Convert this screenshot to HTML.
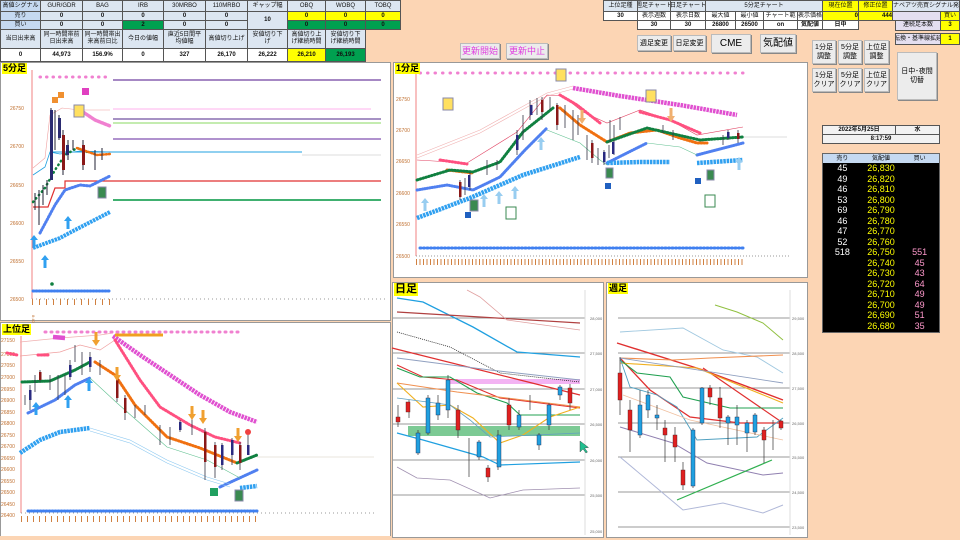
<!DOCTYPE html>
<html><head><meta charset="utf-8">
<style>
*{margin:0;padding:0;box-sizing:border-box}
body{width:960px;height:540px;overflow:hidden;background:#fcd5b4;font-family:"Liberation Sans","Noto Sans CJK JP",sans-serif;position:relative}
.c{position:absolute;border:1px solid #555;font-size:6px;display:flex;align-items:center;justify-content:center;text-align:center;line-height:7px;color:#111;background:#dce6f1;white-space:nowrap;overflow:hidden}
.w{background:#fff}.y{background:#ffff00}.g{background:#00a050}.lb{background:#c5d9f1}.lil{background:#e4dff0}
.b{font-weight:bold}
.btn{position:absolute;background:#ececec;border:1px solid #bbb;box-shadow:1px 1px 0 #888;font-size:7px;display:flex;align-items:center;justify-content:center;text-align:center;line-height:9px}
.panel{position:absolute;background:#fff;border:1px solid #999}
.lbl{position:absolute;background:#ffff00;font-size:9px;font-weight:bold;padding:0 1px;line-height:11px}
svg{position:absolute;left:0;top:0}
.ob{position:absolute;left:822px;top:153px;width:118px;height:180px;background:#000;border:1px solid #666}
.ob div{display:flex;height:10.5px;font-size:9px;line-height:10.5px}
.ob span{width:39px;text-align:center}
</style></head><body>

<!-- header table -->
<div class="c lb" style="left:0;top:0;width:41px;height:12px">高値シグナル</div>
<div class="c" style="left:40;left:40px;top:0;width:43px;height:12px">GUR/GDR</div>
<div class="c" style="left:82px;top:0;width:41px;height:12px">BAG</div>
<div class="c" style="left:122px;top:0;width:42px;height:12px">IRB</div>
<div class="c" style="left:163px;top:0;width:43px;height:12px">30MRBO</div>
<div class="c" style="left:205px;top:0;width:43px;height:12px">110MRBO</div>
<div class="c" style="left:247px;top:0;width:41px;height:12px">ギャップ幅</div>
<div class="c" style="left:287px;top:0;width:39px;height:12px">OBQ</div>
<div class="c" style="left:325px;top:0;width:41px;height:12px">WOBQ</div>
<div class="c" style="left:365px;top:0;width:36px;height:12px">TOBQ</div>

<div class="c lb" style="left:0;top:11px;width:41px;height:10px">売り</div>
<div class="c b" style="left:40px;top:11px;width:43px;height:10px">0</div>
<div class="c b" style="left:82px;top:11px;width:41px;height:10px">0</div>
<div class="c b" style="left:122px;top:11px;width:42px;height:10px">0</div>
<div class="c b" style="left:163px;top:11px;width:43px;height:10px">0</div>
<div class="c b" style="left:205px;top:11px;width:43px;height:10px">0</div>
<div class="c b" style="left:247px;top:11px;width:41px;height:19px">10</div>
<div class="c b y" style="left:287px;top:11px;width:39px;height:10px">0</div>
<div class="c b y" style="left:325px;top:11px;width:41px;height:10px">0</div>
<div class="c b y" style="left:365px;top:11px;width:36px;height:10px">0</div>

<div class="c lb" style="left:0;top:20px;width:41px;height:10px">買い</div>
<div class="c b" style="left:40px;top:20px;width:43px;height:10px">0</div>
<div class="c b" style="left:82px;top:20px;width:41px;height:10px">0</div>
<div class="c b g" style="left:122px;top:20px;width:42px;height:10px">2</div>
<div class="c b" style="left:163px;top:20px;width:43px;height:10px">0</div>
<div class="c b" style="left:205px;top:20px;width:43px;height:10px">0</div>
<div class="c b g" style="left:287px;top:20px;width:39px;height:10px">0</div>
<div class="c b g" style="left:325px;top:20px;width:41px;height:10px">0</div>
<div class="c b g" style="left:365px;top:20px;width:36px;height:10px">0</div>

<div class="c" style="left:0;top:29px;width:41px;height:20px">当日出来高</div>
<div class="c" style="left:40px;top:29px;width:43px;height:20px">同一時間帯前<br>日出来高</div>
<div class="c" style="left:82px;top:29px;width:41px;height:20px">同一時間帯出<br>来高前日比</div>
<div class="c" style="left:122px;top:29px;width:42px;height:20px">今日の値幅</div>
<div class="c" style="left:163px;top:29px;width:43px;height:20px">直近5日間平<br>均値幅</div>
<div class="c" style="left:205px;top:29px;width:43px;height:20px">高値切り上げ</div>
<div class="c" style="left:247px;top:29px;width:41px;height:20px">安値切り下<br>げ</div>
<div class="c" style="left:287px;top:29px;width:39px;height:20px">高値切り上<br>げ継続時間</div>
<div class="c" style="left:325px;top:29px;width:41px;height:20px">安値切り下<br>げ継続時間</div>

<div class="c b w" style="left:0;top:48px;width:41px;height:14px">0</div>
<div class="c b w" style="left:40px;top:48px;width:43px;height:14px">44,973</div>
<div class="c b w" style="left:82px;top:48px;width:41px;height:14px">156.9%</div>
<div class="c b w" style="left:122px;top:48px;width:42px;height:14px">0</div>
<div class="c b w" style="left:163px;top:48px;width:43px;height:14px">327</div>
<div class="c b w" style="left:205px;top:48px;width:43px;height:14px">26,170</div>
<div class="c b w" style="left:247px;top:48px;width:41px;height:14px">26,222</div>
<div class="c b y" style="left:287px;top:48px;width:39px;height:14px">26,210</div>
<div class="c b g" style="left:325px;top:48px;width:41px;height:14px">26,193</div>

<!-- right top table -->
<div class="c" style="left:603px;top:0;width:35px;height:12px">上位足種</div>
<div class="c" style="left:637px;top:0;width:34px;height:12px">週足チャート</div>
<div class="c" style="left:670px;top:0;width:36px;height:12px">日足チャート</div>
<div class="c" style="left:705px;top:0;width:118px;height:12px">5分足チャート</div>
<div class="c y" style="left:822px;top:0;width:37px;height:12px">現在位置</div>
<div class="c y" style="left:858px;top:0;width:35px;height:12px">修正位置</div>
<div class="c" style="left:892px;top:0;width:68px;height:12px">ナベアツ売買シグナル発</div>
<div class="c b w" style="left:603px;top:11px;width:35px;height:10px">30</div>
<div class="c w" style="left:637px;top:11px;width:34px;height:10px">表示週数</div>
<div class="c w" style="left:670px;top:11px;width:36px;height:10px">表示日数</div>
<div class="c w" style="left:705px;top:11px;width:31px;height:10px">最大値</div>
<div class="c w" style="left:735px;top:11px;width:29px;height:10px">最小値</div>
<div class="c w" style="left:763px;top:11px;width:35px;height:10px">チャート範</div>
<div class="c w" style="left:797px;top:11px;width:26px;height:10px">表示価格</div>
<div class="c b y" style="left:822px;top:11px;width:37px;height:10px;justify-content:flex-end">0</div>
<div class="c b y" style="left:858px;top:11px;width:35px;height:10px;justify-content:flex-end">444</div>
<div class="c lil" style="left:892px;top:11px;width:49px;height:10px"></div>
<div class="c y" style="left:940px;top:11px;width:20px;height:10px">買い</div>
<div class="c b w" style="left:637px;top:20px;width:34px;height:10px">30</div>
<div class="c b w" style="left:670px;top:20px;width:36px;height:10px">30</div>
<div class="c b w" style="left:705px;top:20px;width:31px;height:10px">26800</div>
<div class="c b w" style="left:735px;top:20px;width:29px;height:10px">26500</div>
<div class="c b w" style="left:763px;top:20px;width:35px;height:10px">on</div>
<div class="c b w" style="left:797px;top:20px;width:26px;height:10px">気配値</div>
<div class="c b w" style="left:822px;top:20px;width:37px;height:10px">日中</div>
<div class="c lil" style="left:895px;top:20px;width:46px;height:11px">連続足本数</div>
<div class="c b y" style="left:940px;top:20px;width:20px;height:11px">3</div>
<div class="c lil" style="left:895px;top:33px;width:46px;height:12px">転換・基準線拡延</div>
<div class="c b y" style="left:940px;top:33px;width:20px;height:12px">1</div>

<div class="btn" style="left:637px;top:35px;width:34px;height:16px">週足変更</div>
<div class="btn" style="left:673px;top:35px;width:33px;height:16px">日足変更</div>
<div class="btn" style="left:711px;top:34px;width:40px;height:19px;font-size:10px">CME</div>
<div class="btn" style="left:760px;top:34px;width:36px;height:19px;font-size:10px">気配値</div>
<div class="btn" style="left:460px;top:43px;width:40px;height:16px;color:#e040e0;font-size:9px">更新開始</div>
<div class="btn" style="left:506px;top:43px;width:42px;height:16px;color:#e040e0;font-size:9px">更新中止</div>
<div class="btn" style="left:812px;top:40px;width:24px;height:24px">1分足<br>調整</div>
<div class="btn" style="left:838px;top:40px;width:24px;height:24px">5分足<br>調整</div>
<div class="btn" style="left:864px;top:40px;width:25px;height:24px">上位足<br>調整</div>
<div class="btn" style="left:812px;top:68px;width:24px;height:24px">1分足<br>クリア</div>
<div class="btn" style="left:838px;top:68px;width:24px;height:24px">5分足<br>クリア</div>
<div class="btn" style="left:864px;top:68px;width:25px;height:24px">上位足<br>クリア</div>
<div class="btn" style="left:897px;top:52px;width:40px;height:48px">日中･夜間<br>切替</div>

<div class="c b" style="left:822px;top:125px;width:74px;height:10px;background:#f2f2f2">2022年5月25日</div>
<div class="c b" style="left:895px;top:125px;width:45px;height:10px;background:#f2f2f2">水</div>
<div class="c b" style="left:822px;top:134px;width:118px;height:10px;background:#f2f2f2">8:17:59</div>

<div class="ob">
<div style="background:#c5d9f1;height:9px;font-size:6px;color:#000"><span>売り</span><span>気配値</span><span>買い</span></div>
<div><span style="color:#fff">45</span><span style="color:#ff0">26,830</span><span></span></div>
<div><span style="color:#fff">49</span><span style="color:#ff0">26,820</span><span></span></div>
<div><span style="color:#fff">46</span><span style="color:#ff0">26,810</span><span></span></div>
<div><span style="color:#fff">53</span><span style="color:#ff0">26,800</span><span></span></div>
<div><span style="color:#fff">69</span><span style="color:#ff0">26,790</span><span></span></div>
<div><span style="color:#fff">46</span><span style="color:#ff0">26,780</span><span></span></div>
<div><span style="color:#fff">47</span><span style="color:#ff0">26,770</span><span></span></div>
<div><span style="color:#fff">52</span><span style="color:#ff0">26,760</span><span></span></div>
<div><span style="color:#fff">518</span><span style="color:#ff0">26,750</span><span style="color:#f9c">551</span></div>
<div><span></span><span style="color:#ff0">26,740</span><span style="color:#f9c">45</span></div>
<div><span></span><span style="color:#ff0">26,730</span><span style="color:#f9c">43</span></div>
<div><span></span><span style="color:#ff0">26,720</span><span style="color:#f9c">64</span></div>
<div><span></span><span style="color:#ff0">26,710</span><span style="color:#f9c">49</span></div>
<div><span></span><span style="color:#ff0">26,700</span><span style="color:#f9c">49</span></div>
<div><span></span><span style="color:#ff0">26,690</span><span style="color:#f9c">51</span></div>
<div><span></span><span style="color:#ff0">26,680</span><span style="color:#f9c">35</span></div>
</div>

<!-- panels -->
<div class="panel" style="left:0;top:62px;width:391px;height:259px"></div>
<div class="panel" style="left:0;top:322px;width:391px;height:216px"></div>
<div class="panel" style="left:393px;top:62px;width:415px;height:216px"></div>
<div class="panel" style="left:392px;top:282px;width:212px;height:256px"></div>
<div class="panel" style="left:606px;top:282px;width:202px;height:256px"></div>

<svg width="960" height="540" viewBox="0 0 960 540" fill="none" font-family="Liberation Sans" >
<!-- ===== 5min chart ===== -->
<g font-size="5" fill="#c07030">
<text x="10" y="110" fill="#c07030">26750</text><text x="10" y="148" fill="#c07030">26700</text><text x="10" y="187" fill="#c07030">26650</text><text x="10" y="225" fill="#c07030">26600</text><text x="10" y="263" fill="#c07030">26550</text><text x="10" y="301" fill="#c07030">26500</text>
</g>
<line x1="32" y1="70" x2="32" y2="299" stroke="#f08080" stroke-width="1"/>
<line x1="32" y1="299" x2="386" y2="299" stroke="#999" stroke-dasharray="1 3"/>
<line x1="113" y1="80" x2="381" y2="80" stroke="#7040a0" stroke-width="1.2"/>
<line x1="113" y1="109" x2="371" y2="109" stroke="#ffc0f0" stroke-width="1.2"/>
<line x1="113" y1="119" x2="381" y2="119" stroke="#7050a0" stroke-width="1.3"/>
<line x1="113" y1="123" x2="381" y2="123" stroke="#a0e080" stroke-width="1.3"/>
<line x1="113" y1="139" x2="381" y2="139" stroke="#8050b0" stroke-width="1.3"/>
<line x1="52" y1="152" x2="302" y2="152" stroke="#20a0e0" stroke-width="1"/>
<line x1="302" y1="155" x2="381" y2="155" stroke="#ddd" stroke-width="1"/>
<polyline points="33,207 48,207 55,188 65,188 65,181 381,181" stroke="#e03030" stroke-width="1.2"/>
<line x1="113" y1="200" x2="381" y2="200" stroke="#40b070" stroke-width="2"/>
<polyline points="33,168 45,158 50,115 62,108 80,110 110,110" stroke="#f0a0a0" stroke-width=".6"/>
<polyline points="33,175 45,167 50,152 60,154 80,151 110,152" stroke="#20a0e0" stroke-width=".8"/>
<polyline points="83,112 95,120 110,126" stroke="#f080d0" stroke-width="3.5" stroke-dasharray="2 1.5" stroke-linecap="round"/>
<polyline points="33,202 45,188 55,170 65,155 77,148 90,153" stroke="#108040" stroke-width="2.5" stroke-dasharray=".5 4" stroke-linecap="round"/>
<polyline points="77,148 97,155 110,154" stroke="#f07010" stroke-width="2.5" stroke-dasharray="1 2" stroke-linecap="round"/>
<polyline points="40,233 55,205 65,190 80,185 90,186 110,176" stroke="#5080f0" stroke-width="3" stroke-dasharray="1 2" stroke-linecap="round"/>
<polyline points="33,248 60,238 75,230 110,212" stroke="#30a0f0" stroke-width="4" stroke-dasharray="2.5 .8"/>
<line x1="33" y1="291" x2="110" y2="291" stroke="#4080f0" stroke-width="3" stroke-dasharray="1 2" stroke-linecap="round"/>
<line x1="40" y1="77" x2="110" y2="77" stroke="#f080d0" stroke-width="3" stroke-dasharray=".5 6" stroke-linecap="round"/>
<g stroke="#223" stroke-width="1">
<line x1="35" y1="193" x2="35" y2="210"/><line x1="39" y1="190" x2="39" y2="225"/><line x1="43" y1="185" x2="43" y2="205"/><line x1="47" y1="180" x2="47" y2="195"/><line x1="51" y1="108" x2="51" y2="180"/><line x1="55" y1="110" x2="55" y2="150"/><line x1="59" y1="115" x2="59" y2="140"/><line x1="63" y1="130" x2="63" y2="175"/><line x1="68" y1="140" x2="68" y2="160"/><line x1="73" y1="140" x2="73" y2="150"/><line x1="83" y1="140" x2="83" y2="170"/><line x1="95" y1="150" x2="95" y2="170"/><line x1="102" y1="148" x2="102" y2="160"/>
</g>
<g fill="#2a2a70"><rect x="50" y="110" width="3" height="70"/><rect x="58" y="118" width="3" height="20"/><rect x="66" y="145" width="3" height="10"/></g>
<g fill="#8a1818"><rect x="62" y="135" width="3" height="35"/><rect x="82" y="145" width="3" height="20"/></g>
<g fill="#30a0f0"><path d="M30 240l4-5 4 5h-2.5v8h-3v-8z"/><path d="M41 260l4-5 4 5h-2.5v8h-3v-8z"/><path d="M64 221l4-5 4 5h-2.5v8h-3v-8z"/></g>
<rect x="74" y="105" width="10" height="12" fill="#ffe060" stroke="#88a"/>
<rect x="82" y="88" width="7" height="7" fill="#e040c0"/>
<rect x="52" y="97" width="6" height="6" fill="#f09030"/><rect x="58" y="92" width="6" height="6" fill="#f09030"/>
<rect x="98" y="187" width="8" height="11" fill="#3a8a50" stroke="#88a"/>
<circle cx="52" cy="284" r="1.8" fill="#108040"/>
<g font-size="4" fill="#c07030"><text x="32" y="315" transform="rotate(90 32 315)">8:40</text></g>
<line x1="32" y1="302" x2="110" y2="302" stroke="#d08040" stroke-width="6" stroke-dasharray="1 6"/>

<!-- ===== upper chart ===== -->
<g font-size="5" fill="#c07030">
<text x="1" y="342">27150</text><text x="1" y="356">27100</text><text x="1" y="367">27050</text><text x="1" y="379">27000</text><text x="1" y="391">26950</text><text x="1" y="402">26900</text><text x="1" y="414">26850</text><text x="1" y="425">26800</text><text x="1" y="437">26750</text><text x="1" y="448">26700</text><text x="1" y="460">26650</text><text x="1" y="471">26600</text><text x="1" y="483">26550</text><text x="1" y="494">26500</text><text x="1" y="506">26450</text><text x="1" y="517">26400</text>
</g>
<line x1="21" y1="336" x2="21" y2="513" stroke="#f08080"/>
<line x1="21" y1="513" x2="376" y2="513" stroke="#999" stroke-dasharray="1 3"/>
<line x1="257" y1="457" x2="374" y2="457" stroke="#e0ddd0" stroke-width=".8"/>
<polyline points="20,342 60,338 100,335 113,333" stroke="#f0b0b0" stroke-width=".7"/>
<polyline points="20,356 60,352 80,345 100,350 115,340" stroke="#f0a0a0" stroke-width=".7"/>
<polyline points="113,336 140,355 170,375 200,395 230,412 257,422" stroke="#e050d0" stroke-width="4.5" stroke-dasharray="2.5 .8"/>
<line x1="53" y1="337" x2="65" y2="338" stroke="#e050d0" stroke-width="4.5"/>
<polyline points="7,353 17,355" stroke="#ff5080" stroke-width="3" stroke-dasharray="1 2" stroke-linecap="round"/>
<polyline points="38,355 50,355" stroke="#ff5080" stroke-width="3" stroke-dasharray="1 2" stroke-linecap="round"/>
<polyline points="115,340 140,380 160,407 190,425 215,437 240,443" stroke="#ff5080" stroke-width="3" stroke-dasharray="1 2" stroke-linecap="round"/>
<polyline points="95,362 115,375 135,405 167,437 200,448 237,463" stroke="#f07010" stroke-width="3" stroke-dasharray="1 2" stroke-linecap="round"/>
<polyline points="22,382 50,381 75,370 90,362" stroke="#108040" stroke-width="3" stroke-dasharray="1 1.5" stroke-linecap="round"/>
<polyline points="237,463 257,455" stroke="#108040" stroke-width="3" stroke-dasharray="1 1.5" stroke-linecap="round"/>
<polyline points="28,413 55,400 75,385 90,378" stroke="#5080f0" stroke-width="3" stroke-dasharray="1 1.5" stroke-linecap="round"/>
<polyline points="220,487 257,470" stroke="#5080f0" stroke-width="3" stroke-dasharray="1 1.5" stroke-linecap="round"/>
<polyline points="20,453 40,440 60,432 90,428" stroke="#30a0f0" stroke-width="4.5" stroke-dasharray="2.5 .8"/>
<polyline points="240,488 257,486" stroke="#30a0f0" stroke-width="4.5" stroke-dasharray="2.5 .8"/>
<polyline points="90,428 130,440 167,460 207,477 230,484" stroke="#8cc8f0" stroke-width=".6"/>
<polyline points="90,431 130,443 167,463 207,480 230,487" stroke="#8cc8f0" stroke-width=".6"/>
<polyline points="90,378 117,403 167,447 207,460 240,478" stroke="#60c090" stroke-width=".6"/>
<line x1="28" y1="511" x2="257" y2="511" stroke="#4080f0" stroke-width="3" stroke-dasharray="1 2" stroke-linecap="round"/>
<line x1="45" y1="332" x2="240" y2="332" stroke="#f080d0" stroke-width="3" stroke-dasharray="1 5" stroke-linecap="round"/>
<line x1="115" y1="335" x2="163" y2="335" stroke="#f0a020" stroke-width="3"/>
<g stroke="#334" stroke-width=".8">
<line x1="25" y1="395" x2="25" y2="405"/><line x1="30" y1="385" x2="30" y2="410"/><line x1="35" y1="375" x2="35" y2="392"/><line x1="40" y1="370" x2="40" y2="382"/><line x1="50" y1="375" x2="50" y2="390"/><line x1="58" y1="375" x2="58" y2="400"/><line x1="65" y1="375" x2="65" y2="395"/><line x1="70" y1="360" x2="70" y2="380"/><line x1="75" y1="345" x2="75" y2="362"/><line x1="82" y1="352" x2="82" y2="375"/><line x1="90" y1="352" x2="90" y2="372"/><line x1="100" y1="360" x2="100" y2="375"/><line x1="117" y1="375" x2="117" y2="402"/><line x1="125" y1="395" x2="125" y2="420"/><line x1="135" y1="405" x2="135" y2="418"/><line x1="145" y1="405" x2="145" y2="415"/><line x1="160" y1="425" x2="160" y2="445"/><line x1="170" y1="427" x2="170" y2="445"/><line x1="180" y1="420" x2="180" y2="432"/><line x1="192" y1="415" x2="192" y2="435"/><line x1="205" y1="428" x2="205" y2="480"/><line x1="215" y1="442" x2="215" y2="478"/><line x1="222" y1="443" x2="222" y2="470"/><line x1="232" y1="438" x2="232" y2="465"/><line x1="240" y1="442" x2="240" y2="470"/><line x1="248" y1="435" x2="248" y2="455"/>
</g>
<g fill="#2a2a80"><rect x="29" y="390" width="2.5" height="10"/><rect x="69" y="365" width="2.5" height="12"/><rect x="89" y="357" width="2.5" height="10"/><rect x="179" y="422" width="2.5" height="8"/><rect x="221" y="445" width="2.5" height="20"/><rect x="231" y="440" width="2.5" height="15"/><rect x="247" y="445" width="2.5" height="10"/></g>
<g fill="#8a1818"><rect x="39" y="372" width="2.5" height="8"/><rect x="116" y="378" width="2.5" height="20"/><rect x="124" y="398" width="2.5" height="15"/><rect x="204" y="432" width="2.5" height="30"/><rect x="214" y="445" width="2.5" height="22"/><rect x="239" y="445" width="2.5" height="18"/></g>
<g fill="#f0a030"><path d="M92 340l4 6 4-6h-2.5v-8h-3v8z"/><path d="M113 375l4 6 4-6h-2.5v-8h-3v8z"/><path d="M188 414l4 6 4-6h-2.5v-8h-3v8z"/><path d="M199 418l4 6 4-6h-2.5v-8h-3v8z"/><path d="M234 436l4 6 4-6h-2.5v-8h-3v8z"/></g>
<g fill="#30a0f0"><path d="M32 407l4-5 4 5h-2.5v8h-3v-8z"/><path d="M64 400l4-5 4 5h-2.5v8h-3v-8z"/><path d="M85 383l4-5 4 5h-2.5v8h-3v-8z"/></g>
<rect x="210" y="488" width="8" height="8" fill="#20a060"/>
<rect x="235" y="490" width="8" height="11" fill="#3a8a50" stroke="#88a"/>
<circle cx="248" cy="432" r="3" fill="#f04040"/>
<text x="2" y="333" font-size="0"> </text>
<line x1="21" y1="519" x2="257" y2="519" stroke="#d08040" stroke-width="6" stroke-dasharray="1 5"/>
<rect x="0" y="536" width="391" height="4" fill="#fcd5b4"/>

<!-- ===== 1min chart ===== -->
<g font-size="5" fill="#c07030">
<text x="396" y="101">26750</text><text x="396" y="132">26700</text><text x="396" y="163">26650</text><text x="396" y="195">26600</text><text x="396" y="226">26550</text><text x="396" y="258">26500</text>
</g>
<line x1="416" y1="68" x2="416" y2="256" stroke="#f08080"/>
<line x1="416" y1="256" x2="790" y2="256" stroke="#999" stroke-dasharray="1 2"/>
<line x1="420" y1="73" x2="745" y2="73" stroke="#f080d0" stroke-width="3" stroke-dasharray=".5 7" stroke-linecap="round"/>
<line x1="420" y1="248" x2="745" y2="248" stroke="#4080f0" stroke-width="3" stroke-dasharray="1 2.5" stroke-linecap="round"/>
<polyline points="417,155 480,130 547,93 573,86" stroke="#f0b0b0" stroke-width=".6"/>
<polyline points="417,158 480,133 547,96 573,89" stroke="#f0b0b0" stroke-width=".6"/>
<polyline points="417,160 467,163 517,132 547,95 563,96 583,112 607,123 640,110 670,120 697,135 743,127" stroke="#e04060" stroke-width=".6"/>
<line x1="743" y1="137" x2="787" y2="137" stroke="#ddd"/>
<polyline points="573,88 620,96 680,105 737,115" stroke="#e050d0" stroke-width="4.5" stroke-dasharray="2.5 .8"/>
<polyline points="440,160 467,164" stroke="#ff5080" stroke-width="3" stroke-dasharray="1 2" stroke-linecap="round"/>
<polyline points="560,95 577,105 600,123" stroke="#ff5080" stroke-width="3" stroke-dasharray="1 2" stroke-linecap="round"/>
<polyline points="640,112 670,120 700,133" stroke="#ff5080" stroke-width="3" stroke-dasharray="1 2" stroke-linecap="round"/>
<polyline points="447,170 473,173" stroke="#f07010" stroke-width="3" stroke-dasharray="1 2" stroke-linecap="round"/>
<polyline points="560,108 580,125 607,142 630,133 657,130 680,138 697,143 707,143" stroke="#f07010" stroke-width="3" stroke-dasharray="1 2" stroke-linecap="round"/>
<polyline points="417,180 450,170 473,172 500,162 523,132 553,108" stroke="#108040" stroke-width="3" stroke-dasharray="1 2" stroke-linecap="round"/>
<polyline points="607,142 647,128 700,140 743,137" stroke="#108040" stroke-width="3" stroke-dasharray="1 2" stroke-linecap="round"/>
<polyline points="417,190 447,185 473,190 500,177 525,150 547,128" stroke="#5080f0" stroke-width="3" stroke-dasharray="1 1.5" stroke-linecap="round"/>
<polyline points="607,163 647,143" stroke="#5080f0" stroke-width="3" stroke-dasharray="1 1.5" stroke-linecap="round"/>
<polyline points="697,155 743,143" stroke="#5080f0" stroke-width="3" stroke-dasharray="1 1.5" stroke-linecap="round"/>
<polyline points="417,218 470,198 523,175 580,157" stroke="#30a0f0" stroke-width="4.5" stroke-dasharray="2.5 .8"/>
<polyline points="607,163 640,162 670,162" stroke="#30a0f0" stroke-width="4.5" stroke-dasharray="2.5 .8"/>
<polyline points="697,163 743,160" stroke="#30a0f0" stroke-width="4.5" stroke-dasharray="2.5 .8"/>
<polyline points="547,130 580,143 600,160 607,165" stroke="#60c090" stroke-width=".6"/>
<polyline points="647,143 680,147 697,155" stroke="#60c090" stroke-width=".6"/>
<g stroke="#334" stroke-width=".8">
<line x1="460" y1="180" x2="460" y2="200"/><line x1="465" y1="178" x2="465" y2="195"/><line x1="470" y1="172" x2="470" y2="190"/><line x1="487" y1="160" x2="487" y2="175"/><line x1="497" y1="160" x2="497" y2="170"/><line x1="517" y1="130" x2="517" y2="155"/><line x1="523" y1="115" x2="523" y2="140"/><line x1="530" y1="100" x2="530" y2="120"/><line x1="537" y1="98" x2="537" y2="115"/><line x1="542" y1="97" x2="542" y2="120"/><line x1="550" y1="97" x2="550" y2="110"/><line x1="557" y1="103" x2="557" y2="130"/><line x1="565" y1="105" x2="565" y2="128"/><line x1="573" y1="110" x2="573" y2="140"/><line x1="578" y1="115" x2="578" y2="135"/><line x1="587" y1="135" x2="587" y2="160"/><line x1="592" y1="140" x2="592" y2="163"/><line x1="598" y1="148" x2="598" y2="165"/><line x1="604" y1="150" x2="604" y2="165"/><line x1="609" y1="145" x2="609" y2="158"/><line x1="614" y1="140" x2="614" y2="155"/><line x1="610" y1="120" x2="610" y2="142"/><line x1="614" y1="125" x2="614" y2="138"/><line x1="620" y1="117" x2="620" y2="130"/><line x1="663" y1="125" x2="663" y2="133"/><line x1="673" y1="130" x2="673" y2="140"/><line x1="723" y1="135" x2="723" y2="145"/><line x1="728" y1="130" x2="728" y2="140"/><line x1="738" y1="130" x2="738" y2="143"/></g>
<g fill="#2a2a80"><rect x="468" y="175" width="2.5" height="12"/><rect x="516" y="135" width="2.5" height="15"/><rect x="530" y="105" width="2.5" height="10"/><rect x="603" y="152" width="2.5" height="10"/><rect x="612" y="142" width="2.5" height="12"/><rect x="727" y="132" width="2.5" height="6"/></g>
<g fill="#8a1818"><rect x="459" y="182" width="2.5" height="15"/><rect x="541" y="100" width="2.5" height="12"/><rect x="556" y="105" width="2.5" height="20"/><rect x="591" y="143" width="2.5" height="15"/><rect x="737" y="133" width="2.5" height="6"/></g>
<g fill="#98cdf0"><path d="M421 203l4-5 4 5h-2.5v8h-3v-8z"/><path d="M480 199l4-5 4 5h-2.5v8h-3v-8z"/><path d="M495 196l4-5 4 5h-2.5v8h-3v-8z"/><path d="M511 191l4-5 4 5h-2.5v8h-3v-8z"/><path d="M537 142l4-5 4 5h-2.5v8h-3v-8z"/><path d="M735 162l4-5 4 5h-2.5v8h-3v-8z"/></g>
<g fill="#f0b070"><path d="M578 118l4 6 4-6h-2.5v-8h-3v8z"/><path d="M667 116l4 6 4-6h-2.5v-8h-3v8z"/></g>
<rect x="443" y="98" width="10" height="12" fill="#ffe060" stroke="#88a"/>
<rect x="556" y="69" width="10" height="12" fill="#ffe060" stroke="#88a"/>
<rect x="646" y="90" width="10" height="12" fill="#ffe060" stroke="#88a"/>
<rect x="506" y="207" width="10" height="12" fill="#fff" stroke="#3a8a50"/>
<rect x="705" y="195" width="10" height="12" fill="#fff" stroke="#3a8a50"/>
<rect x="470" y="200" width="8" height="11" fill="#3a8a50" stroke="#88a"/>
<rect x="606" y="168" width="7" height="10" fill="#3a8a50" stroke="#88a"/>
<rect x="707" y="170" width="7" height="10" fill="#3a8a50" stroke="#88a"/>
<rect x="465" y="212" width="6" height="6" fill="#2060c0"/><rect x="605" y="183" width="6" height="6" fill="#2060c0"/><rect x="695" y="178" width="6" height="6" fill="#2060c0"/>
<line x1="416" y1="262" x2="745" y2="262" stroke="#d08040" stroke-width="6" stroke-dasharray="1 2.5"/>

<!-- ===== daily ===== -->
<g stroke="#999" stroke-width="1"><line x1="393" y1="318" x2="585" y2="318"/><line x1="393" y1="353" x2="585" y2="353"/><line x1="393" y1="389" x2="585" y2="389"/><line x1="393" y1="424" x2="585" y2="424"/><line x1="393" y1="460" x2="585" y2="460"/><line x1="393" y1="495" x2="585" y2="495"/></g>
<line x1="585" y1="290" x2="585" y2="535" stroke="#ddd"/>
<g font-size="4" fill="#666"><text x="590" y="320">28,000</text><text x="590" y="355">27,500</text><text x="590" y="391">27,000</text><text x="590" y="426">26,500</text><text x="590" y="462">26,000</text><text x="590" y="497">25,500</text><text x="590" y="533">25,000</text></g>
<rect x="408" y="426" width="172" height="10" fill="#50b870" opacity=".75"/>
<rect x="448" y="379" width="132" height="5" fill="#f0a0f0" opacity=".8"/>
<polyline points="397,298 423,302 473,327 517,352 580,357" stroke="#20a0e0" stroke-width="1.3"/>
<polyline points="397,312 580,323" stroke="#b04040" stroke-width="1.2"/>
<polyline points="467,290 480,297 507,320 580,330" stroke="#e0a0a0" stroke-width=".8"/>
<polyline points="397,332 450,347 500,373 580,382" stroke="#222" stroke-width=".8" stroke-dasharray="1 1"/>
<polyline points="392,348 580,395" stroke="#e03030" stroke-width="1.3"/>
<polyline points="397,358 490,370 580,380" stroke="#90a0c0" stroke-width=".9"/>
<polyline points="397,365 423,377 457,380 500,398 580,408" stroke="#e03030" stroke-width="1.1"/>
<polyline points="397,368 420,377 450,377 477,393 507,403 520,415 580,415" stroke="#20a050" stroke-width="1.1"/>
<polyline points="397,383 457,392 580,407" stroke="#f09050" stroke-width="1.1"/>
<polyline points="397,383 423,407 450,405 473,418 500,443 523,435 550,417 580,407" stroke="#f0b020" stroke-width="1.1"/>
<polyline points="397,398 450,405 470,420 490,437 580,433" stroke="#60a0c0" stroke-width=".8"/>
<polyline points="397,433 423,440 483,457 500,465 580,462" stroke="#20a0e0" stroke-width="1.2"/>
<polyline points="397,467 417,478 450,480 490,498 523,490 580,488" stroke="#a090b0" stroke-width=".8"/>
<g stroke="#333" stroke-width=".7"><line x1="398" y1="405" x2="398" y2="427"/><line x1="409" y1="400" x2="409" y2="418"/><line x1="418" y1="430" x2="418" y2="455"/><line x1="428" y1="395" x2="428" y2="435"/><line x1="438" y1="395" x2="438" y2="420"/><line x1="448" y1="375" x2="448" y2="418"/><line x1="458" y1="405" x2="458" y2="438"/><line x1="469" y1="438" x2="469" y2="477"/><line x1="479" y1="440" x2="479" y2="460"/><line x1="488" y1="465" x2="488" y2="482"/><line x1="498" y1="430" x2="498" y2="470"/><line x1="509" y1="398" x2="509" y2="430"/><line x1="519" y1="410" x2="519" y2="430"/><line x1="530" y1="395" x2="530" y2="410"/><line x1="539" y1="433" x2="539" y2="450"/><line x1="549" y1="403" x2="549" y2="430"/><line x1="560" y1="385" x2="560" y2="400"/><line x1="570" y1="384" x2="570" y2="410"/></g>
<g fill="#20a0e0" stroke="#224" stroke-width=".4"><rect x="416" y="433" width="4" height="20"/><rect x="426" y="398" width="4" height="35"/><rect x="436" y="403" width="4" height="12"/><rect x="446" y="380" width="4" height="30"/><rect x="477" y="442" width="4" height="15"/><rect x="497" y="435" width="4" height="32"/><rect x="517" y="415" width="4" height="12"/><rect x="537" y="435" width="4" height="10"/><rect x="547" y="405" width="4" height="20"/><rect x="558" y="387" width="4" height="8"/></g>
<g fill="#e02020" stroke="#422" stroke-width=".4"><rect x="396" y="417" width="4" height="5"/><rect x="406" y="402" width="4" height="10"/><rect x="456" y="410" width="4" height="20"/><rect x="486" y="468" width="4" height="9"/><rect x="507" y="405" width="4" height="20"/><rect x="568" y="388" width="4" height="15"/></g>
<path d="M580 441l0 11 3-3 3 4 1.5-1-3-4 4-.5z" fill="#20c090" stroke="#333" stroke-width=".4"/>

<!-- ===== weekly ===== -->
<g stroke="#999"><line x1="618" y1="318" x2="790" y2="318"/><line x1="618" y1="353" x2="790" y2="353"/><line x1="618" y1="388" x2="790" y2="388"/><line x1="618" y1="423" x2="790" y2="423"/><line x1="618" y1="457" x2="790" y2="457"/><line x1="618" y1="492" x2="790" y2="492"/><line x1="618" y1="527" x2="790" y2="527"/></g>
<line x1="790" y1="290" x2="790" y2="535" stroke="#ddd"/>
<g font-size="4" fill="#666"><text x="792" y="320">29,500</text><text x="792" y="355">28,500</text><text x="792" y="390">27,500</text><text x="792" y="425">26,500</text><text x="792" y="459">25,500</text><text x="792" y="494">24,500</text><text x="792" y="529">23,500</text></g>
<polyline points="715,305 737,312 763,323 783,340" stroke="#90c040" stroke-width="1"/>
<polyline points="620,332 683,328 723,350 757,357 783,373" stroke="#a0c8e0" stroke-width=".9"/>
<polyline points="617,343 703,370 783,400" stroke="#e03030" stroke-width="1.4"/>
<polyline points="620,358 650,390 690,417 740,423 783,423" stroke="#e03030" stroke-width="1.3"/>
<polyline points="703,368 783,423" stroke="#e03030" stroke-width="1.2"/>
<polyline points="620,358 673,360 710,358 783,355" stroke="#f09050" stroke-width="1.1"/>
<polyline points="620,363 697,368 783,403" stroke="#f0b020" stroke-width="1.1"/>
<polyline points="620,360 637,373 670,377 683,397 730,408 783,408" stroke="#20a050" stroke-width="1.1"/>
<polyline points="620,358 783,383" stroke="#90a0c0" stroke-width=".9"/>
<polyline points="620,358 630,387 657,395 677,407 697,440 757,437 783,418" stroke="#50a0c0" stroke-width=".9"/>
<polyline points="623,395 690,420 783,440" stroke="#f0c0a0" stroke-width=".8"/>
<polyline points="620,427 673,443 707,463 763,475 783,473" stroke="#9080b0" stroke-width="1"/>
<polyline points="620,457 683,510 723,503 763,513 783,505" stroke="#b0b8d8" stroke-width="1"/>
<polyline points="677,500 772,460" stroke="#30b050" stroke-width="1.2"/>
<g stroke="#333" stroke-width=".7"><line x1="620" y1="357" x2="620" y2="415"/><line x1="630" y1="400" x2="630" y2="452"/><line x1="640" y1="390" x2="640" y2="438"/><line x1="648" y1="390" x2="648" y2="418"/><line x1="657" y1="405" x2="657" y2="430"/><line x1="665" y1="420" x2="665" y2="462"/><line x1="675" y1="427" x2="675" y2="462"/><line x1="683" y1="462" x2="683" y2="490"/><line x1="693" y1="428" x2="693" y2="488"/><line x1="702" y1="387" x2="702" y2="425"/><line x1="710" y1="385" x2="710" y2="405"/><line x1="720" y1="387" x2="720" y2="428"/><line x1="728" y1="415" x2="728" y2="445"/><line x1="737" y1="405" x2="737" y2="445"/><line x1="747" y1="420" x2="747" y2="452"/><line x1="755" y1="413" x2="755" y2="435"/><line x1="764" y1="427" x2="764" y2="463"/><line x1="773" y1="420" x2="773" y2="450"/><line x1="781" y1="420" x2="781" y2="430"/></g>
<g fill="#e02020" stroke="#422" stroke-width=".4"><rect x="618" y="373" width="4" height="27"/><rect x="628" y="410" width="4" height="20"/><rect x="663" y="428" width="4" height="7"/><rect x="673" y="435" width="4" height="12"/><rect x="681" y="470" width="4" height="15"/><rect x="708" y="388" width="4" height="9"/><rect x="718" y="398" width="4" height="20"/><rect x="762" y="430" width="4" height="10"/><rect x="779" y="421" width="4" height="7"/></g>
<g fill="#20a0e0" stroke="#224" stroke-width=".4"><rect x="638" y="405" width="4" height="30"/><rect x="646" y="395" width="4" height="15"/><rect x="655" y="415" width="4" height="3"/><rect x="691" y="430" width="4" height="56"/><rect x="700" y="388" width="4" height="35"/><rect x="726" y="417" width="4" height="6"/><rect x="735" y="417" width="4" height="8"/><rect x="745" y="423" width="4" height="10"/><rect x="753" y="415" width="4" height="17"/></g>

<!-- panel labels -->
</svg>
<div class="lbl" style="left:2px;top:63px">5分足</div>
<div class="lbl" style="left:2px;top:324px">上位足</div>
<div class="lbl" style="left:395px;top:63px">1分足</div>
<div class="lbl" style="left:394px;top:283px;font-size:11px;line-height:13px">日足</div>
<div class="lbl" style="left:608px;top:283px">週足</div>
</body></html>
